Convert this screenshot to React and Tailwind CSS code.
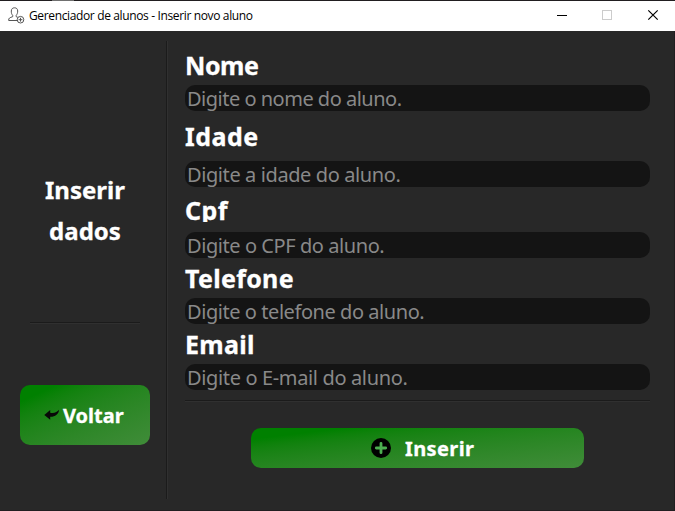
const fields = [
  { label: "Nome", hint: "Digite o nome do aluno.", labelBox: "h-[32px] mt-[10px] tracking-[-0.45px]", inputBox: "mt-[4px]", hintBox: "tracking-[-0.5px]" },
  { label: "Idade", hint: "Digite a idade do aluno.", labelBox: "h-[32px] mt-[9px] tracking-[0.5px]", inputBox: "mt-[9px]", hintBox: "tracking-[-0.4px]" },
  { label: "Cpf", hint: "Digite o CPF do aluno.", labelBox: "h-[28px] mt-[7px] overflow-hidden tracking-[0.5px]", inputBox: "mt-[10px]", hintBox: "tracking-[-0.43px]" },
  { label: "Telefone", hint: "Digite o telefone do aluno.", labelBox: "h-[32px] mt-[4px] tracking-[0.3px]", inputBox: "mt-[4px]", hintBox: "tracking-[-0.44px]" },
  { label: "Email", hint: "Digite o E-mail do aluno.", labelBox: "h-[32px] mt-[4px] tracking-[0.3px]", inputBox: "mt-[4px]", hintBox: "tracking-[-0.36px]" },
];

function UserPlusIcon() {
  return (
    <svg className="ml-[8px] mt-[6px] h-[17px] w-[17px] shrink-0" viewBox="0 0 17 17" fill="none" stroke="#555" strokeWidth="1">
      <path d="M9.5 13.5H.7c-.3-2.5 1.2-2.9 4-3.8V8.3C3.5 7.2 3.3 5.7 3.3 4c0-2.100 1.300-3.200 3.200-3.200S9.700 1.900 9.700 4c0 1.700-.4 3.200-1.500 4.300v1.400l1.600.6" />
      <circle cx="12.500" cy="12.700" r="3.300" />
      <path d="M12.500 10.800v3.800M10.600 12.700h3.800" />
    </svg>
  );
}

function TitleBar() {
  return (
    <header className="flex h-[30px] shrink-0 bg-white font-['Open_Sans','Noto_Sans',sans-serif] text-black">
      <UserPlusIcon />
      <h1 className="ml-[4px] text-[12px] leading-[30px] tracking-[-0.36px] whitespace-nowrap">Gerenciador de alunos - Inserir novo aluno</h1>
      <svg className="ml-auto h-[30px] w-[135px] shrink-0" viewBox="0 0 135 30" fill="none" shapeRendering="crispEdges">
        <path d="M17 14.500h10" stroke="#000" />
        <rect x="62.500" y="9.500" width="9" height="9" stroke="#ccc" />
        <path d="M108.300 9.300l9.400 9.400M117.700 9.300l-9.400 9.400" stroke="#000" strokeWidth="1.200" shapeRendering="auto" />
      </svg>
    </header>
  );
}

function Sidebar() {
  return (
    <aside className="flex w-[166px] shrink-0 flex-col">
      <h2 className="mt-[138px] ml-[4px] text-center text-[24px] leading-[41px] font-bold text-white [-webkit-text-stroke:0.3px_white]">
        Inserir
        <br />
        dados
      </h2>
      <hr className="mt-[71px] ml-[30px] h-[2px] w-[110px] border-t border-b border-t-[#1b1b1b] border-b-[#303030]" />
      <button className="mt-[61px] ml-[20px] flex h-[60px] w-[130px] items-center rounded-[10px] bg-linear-to-br from-[#008000] from-14% to-[#408c39] pl-[24px] text-[20px] font-bold text-white">
        <svg className="h-[12px] w-[16px] shrink-0" viewBox="0 0 16 12">
          <path d="M.3 6L6.200 1v2.700C10 4.400 13.300 3.300 14.900.8c.3 4.300-4.200 7.200-8.700 7v2.900z" fill="#080808" />
        </svg>
        <span className="mt-[2px] ml-[3px] [-webkit-text-stroke:0.3px_white]">Voltar</span>
      </button>
    </aside>
  );
}

function Field({ field }) {
  return (
    <>
      <label className={`block shrink-0 text-[25px] leading-[32px] font-bold text-white [-webkit-text-stroke:0.3px_white] ${field.labelBox}`}>{field.label}</label>
      <div className={`h-[26px] w-[465px] shrink-0 rounded-[10px] bg-[#141414] pl-[2px] text-[20px] leading-[27px] whitespace-nowrap text-[#898989] ${field.inputBox}`}>
        <span className={field.hintBox}>{field.hint}</span>
      </div>
    </>
  );
}

export default function App() {
  return (
    <div className="flex h-[511px] w-[675px] flex-col overflow-hidden bg-[#211e20] font-['Noto_Sans',sans-serif]">
      <div className="h-px shrink-0 pl-[52px]">
        <div className="h-px w-[22px] bg-[#707070]" />
      </div>
      <TitleBar />
      <main className="mr-px flex h-[479px] shrink-0 bg-[#282828]">
        <Sidebar />
        <div className="mt-[10px] h-[458px] w-[2px] shrink-0 border-r border-l border-r-[#303030] border-l-[#1b1b1b]" />
        <form className="ml-[17px] flex w-[466px] flex-col pt-[8px]">
          {fields.map((field) => (
            <Field key={field.label} field={field} />
          ))}
          <hr className="mt-[10px] h-[2px] w-[465px] shrink-0 border-t border-b border-t-[#1b1b1b] border-b-[#303030]" />
          <button type="button" className="mt-[26px] ml-[66px] flex h-[40px] w-[333px] shrink-0 items-center rounded-[10px] bg-linear-to-br from-[#008000] from-14% to-[#408c39] pl-[120px] text-[20px] font-bold text-white">
            <svg className="h-[20px] w-[20px] shrink-0" viewBox="0 0 20 20">
              <circle cx="10" cy="10" r="10" fill="#000" />
              <path d="M10 5.300v9.400M5.300 10h9.400" stroke="#4caf50" strokeWidth="2.800" strokeLinecap="round" />
            </svg>
            <span className="mt-[2px] ml-[14px] tracking-[0.4px] [-webkit-text-stroke:0.3px_white]">Inserir</span>
          </button>
        </form>
      </main>
    </div>
  );
}
